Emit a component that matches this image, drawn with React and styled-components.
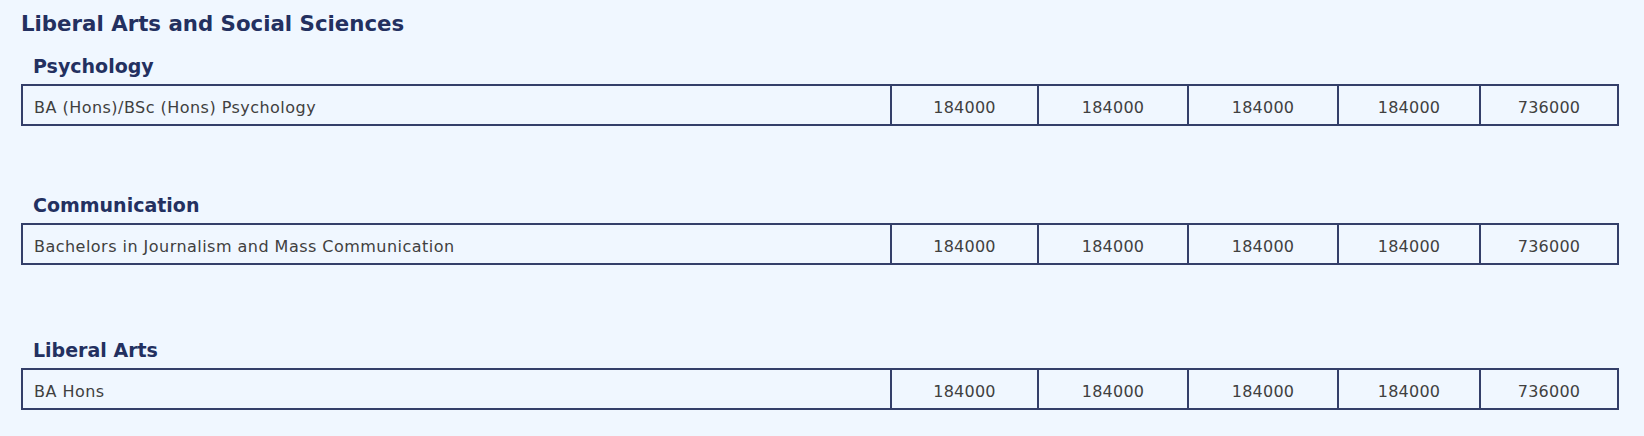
import React from "react";
import styled, { createGlobalStyle } from "styled-components";

const GlobalStyle = createGlobalStyle`
  html, body {
    margin: 0;
    padding: 0;
    background: #f0f7ff;
  }
  body {
    font-family: "DejaVu Sans", "Liberation Sans", sans-serif;
  }
`;

const Page = styled.div`
  padding: 9px 25px 0 21px;
  background: #f0f7ff;
  min-height: 436px;
  box-sizing: border-box;
`;

const Title = styled.h2`
  margin: 0;
  font-size: 21.3px;
  line-height: 30px;
  font-weight: 700;
  color: #233060;
`;

const Section = styled.section`
  margin-top: ${(p) => p.$gap}px;
`;

const SubHeading = styled.h3`
  margin: 0 0 6px 12px;
  font-size: 19px;
  line-height: 24px;
  font-weight: 700;
  color: #233060;
`;

const Table = styled.table`
  width: 100%;
  table-layout: fixed;
  border-collapse: separate;
  border-spacing: 0;
  border-top: 2px solid #343f69;
  border-left: 2px solid #343f69;
`;

const Cell = styled.td`
  height: 40px;
  box-sizing: border-box;
  padding: 4px ${(p) => (p.$align === "left" ? "11px" : "0")} 0;
  border-right: 2px solid #343f69;
  border-bottom: 2px solid #343f69;
  text-align: ${(p) => p.$align};
  font-size: 16px;
  letter-spacing: ${(p) => (p.$align === "left" ? "0.47px" : "0.2px")};
  color: #404040;
  white-space: nowrap;
`;

const widths = [869, 147, 150, 150, 142, 138];

const sections = [
  { name: "Psychology", program: "BA (Hons)/BSc (Hons) Psychology", gap: 15 },
  { name: "Communication", program: "Bachelors in Journalism and Mass Communication", gap: 67 },
  { name: "Liberal Arts", program: "BA Hons", gap: 73 },
];

const fees = ["184000", "184000", "184000", "184000", "736000"];

export default function App() {
  return (
    <>
      <GlobalStyle />
      <Page>
        <Title>Liberal Arts and Social Sciences</Title>
        {sections.map((s) => (
          <Section key={s.name} $gap={s.gap}>
            <SubHeading>{s.name}</SubHeading>
            <Table>
              <colgroup>
                {widths.map((w, i) => (
                  <col key={i} style={{ width: w }} />
                ))}
              </colgroup>
              <tbody>
                <tr>
                  <Cell $align="left">{s.program}</Cell>
                  {fees.map((f, i) => (
                    <Cell key={i} $align="center">
                      {f}
                    </Cell>
                  ))}
                </tr>
              </tbody>
            </Table>
          </Section>
        ))}
      </Page>
    </>
  );
}
